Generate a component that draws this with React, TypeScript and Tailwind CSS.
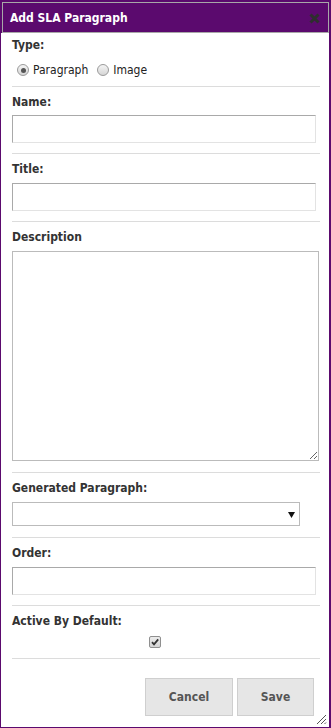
import React from "react";

const F = { fontFamily: '"DejaVu Sans Condensed", "DejaVu Sans", Tahoma, sans-serif' };

function Radio({ checked }: { checked?: boolean }) {
  return (
    <span className="relative inline-block w-[12px] h-[12px] rounded-full border border-[#9a9a9a] bg-gradient-to-b from-[#f4f4f4] to-[#d6d6d6]">
      {checked && (
        <span className="absolute left-[2.5px] top-[2.5px] w-[5px] h-[5px] rounded-full bg-[#555]" />
      )}
    </span>
  );
}

function Label({ children, className = "" }: { children: React.ReactNode; className?: string }) {
  return (
    <div className={`text-[12px] leading-[14px] h-[14px] font-bold text-[#333] ${className}`}>{children}</div>
  );
}

function TextInput({ className = "" }: { className?: string }) {
  return (
    <input
      type="text"
      className={`block w-[304px] h-[28px] border border-t-[#a9a9a9] border-l-[#a9a9a9] border-b-[#e3e3e3] border-r-[#e3e3e3] bg-white outline-none ${className}`}
    />
  );
}

function Sep({ className = "" }: { className?: string }) {
  return <div className={`h-px bg-[#dcdcdc] ${className}`} />;
}

export default function App() {
  return (
    <div className="w-[331px] h-[728px] bg-[#5b0a6e] pt-[2px] flex flex-col" style={F}>
      <div className="mx-[2px] h-[31px] border border-[#a8a8a8] flex items-center justify-between pl-[7px] pr-[8px]">
        <span className="text-white font-bold text-[12px] leading-[14px] mt-[1px]">Add SLA Paragraph</span>
        <svg width="11" height="11" viewBox="0 0 11 11" className="mt-[1px]">
          <path d="M1.5 1.5 L9.5 9.5 M9.5 1.5 L1.5 9.5" stroke="#2e2e2e" strokeWidth="3" strokeLinecap="butt" />
        </svg>
      </div>
      <div className="relative flex-1 bg-white ml-px mr-[2px] mb-px pl-[11px] pr-[9px] flex flex-col text-[#333]">
        <Label className="mt-[5px]">Type:</Label>
        <div className="mt-[11px] h-[14px] flex items-center text-[12px] leading-[14px] text-[#222] pl-[5px]">
          <Radio checked />
          <span className="ml-[4px]">Paragraph</span>
          <span className="ml-[9px] inline-flex"><Radio /></span>
          <span className="ml-[4px]">Image</span>
        </div>
        <Sep className="mt-[9px]" />

        <Label className="mt-[8px]">Name:</Label>
        <TextInput className="mt-[6px]" />
        <Sep className="mt-[10px]" />

        <Label className="mt-[8px]">Title:</Label>
        <TextInput className="mt-[7px]" />
        <Sep className="mt-[10px]" />

        <Label className="mt-[8px]">Description</Label>
        <textarea className="block mt-[7px] w-[307px] h-[210px] border border-[#bbbbbb] bg-white outline-none resize" />
        <Sep className="mt-[11px]" />

        <Label className="mt-[8px]">Generated Paragraph:</Label>
        <div className="relative mt-[7px] w-[288px] h-[24px] border border-[#bbbbbb] bg-white">
          <svg width="7" height="6" viewBox="0 0 7 6" className="absolute left-[275px] top-[9px]">
            <path d="M0 0 H7 L3.5 6 Z" fill="#111" />
          </svg>
        </div>
        <Sep className="mt-[11px]" />

        <Label className="mt-[8px]">Order:</Label>
        <TextInput className="mt-[7px]" />
        <Sep className="mt-[10px]" />

        <Label className="mt-[8px]">Active By Default:</Label>
        <div className="mt-[8px] pl-[137px] h-[12px]">
          <span className="relative block w-[12px] h-[12px] rounded-[2px] border border-[#8f8f8f] bg-gradient-to-b from-[#ececec] to-[#d4d4d4]">
            <svg width="10" height="10" viewBox="0 0 10 10" className="absolute left-0 top-0">
              <path d="M2 5.2 L4 7.3 L8.2 2.4" stroke="#333" strokeWidth="1.8" fill="none" />
            </svg>
          </span>
        </div>
        <Sep className="mt-[10px]" />

        <div className="mt-[19px] flex justify-end gap-[4px] pr-[6px]">
          <button className="w-[88px] h-[38px] bg-[#e6e6e6] border border-[#cfcfcf] text-[#555] font-bold text-[12px]">Cancel</button>
          <button className="w-[77px] h-[38px] bg-[#e6e6e6] border border-[#cfcfcf] text-[#555] font-bold text-[12px]">Save</button>
        </div>

        <svg width="12" height="12" viewBox="0 0 12 12" className="absolute right-[2px] bottom-[2px]">
          <path d="M11 2 L2 11 M11 6 L6 11 M11 9.5 L9.5 11" stroke="#555" strokeWidth="1" />
        </svg>
      </div>
    </div>
  );
}
